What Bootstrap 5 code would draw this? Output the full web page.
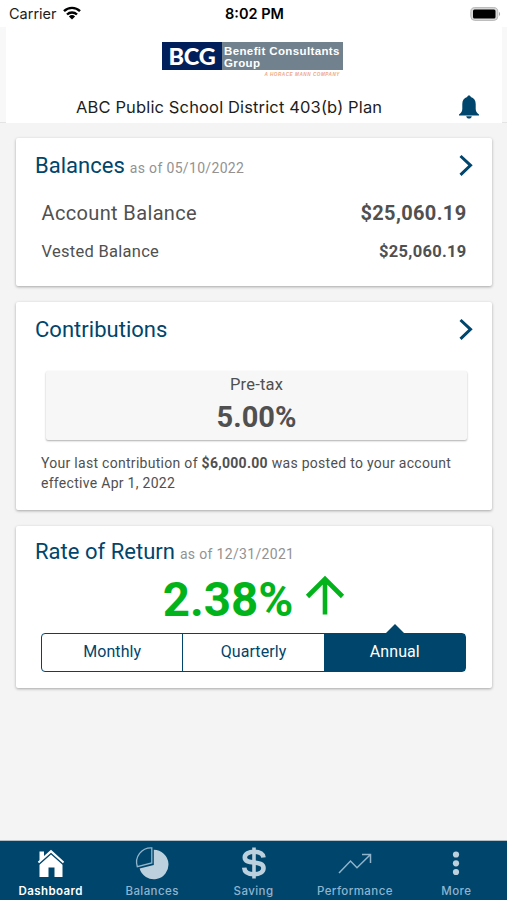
<!DOCTYPE html>
<html lang="en">
<head>
<meta charset="utf-8">
<meta name="viewport" content="width=device-width, initial-scale=1">
<title>Dashboard</title>
<link href="https://cdn.jsdelivr.net/npm/bootstrap@5.3.0/dist/css/bootstrap.min.css" rel="stylesheet">
<style>
  :root { --navy: #00456b; --ink: #505050; }
  body { font-family: Roboto, "Liberation Sans", sans-serif; background: #f4f4f4; color: var(--ink); height: 900px; overflow: hidden; }
  svg { display: block; flex: none; }
  .status-bar { height: 27px; background: #fff; font: 14.5px/27px Inter, sans-serif; color: #1c1c1c; padding: 0 7px 0 9px; }
  .status-bar > * { flex: 1 1 0; }
  .status-bar .wifi { margin-left: 6px; margin-top: -2px; }
  .status-bar .battery { margin-right: -2px; }
  .clock { font-weight: 600; color: #000; font-size: 14.5px; }
  .header-wrap { background: #f8f8f8; border-bottom: 1px solid #e4e4e4; height: 96px; }
  .plan-header { height: 96px; margin: 0 5px 0 6px; background: #fff; }
  .brand-logo { width: 181px; margin: 0 0 0 156px; padding-top: 15px; }
  .brand-box { height: 28px; color: #fff; }
  .brand-short { width: 60px; background: #011f5b; font: 900 23.5px/29px Lato, sans-serif; letter-spacing: -.2px; }
  .brand-long { background: #71828e; font: 700 11.5px/12px "Liberation Sans", sans-serif; padding: 3px 0 0 2px; letter-spacing: .38px; white-space: nowrap; }
  .brand-tag { font: italic 700 4.6px/8px "Liberation Sans", sans-serif; color: #eda685; letter-spacing: .56px; padding-right: 3px; margin-top: 1px; }
  .plan-name { font: 16.5px/22px Inter, sans-serif; color: #1d1d1d; letter-spacing: .14px; padding-left: 70px; height: 22px; margin-top: 17px; }
  .plan-name svg { margin-right: 22px; }
  .panel { background: #fff; border: 0; border-radius: 2px; margin: 0 15px 15.5px 16px; box-shadow: 0 1px 3px rgba(0,0,0,.32); color: var(--ink); }
  .panel-title { font-size: 22px; line-height: 26px; font-weight: 400; color: var(--navy); letter-spacing: .02px; }
  .as-of { font-size: 14px; color: #929292; letter-spacing: .33px; margin-left: 1px; }
  .panel-head { padding: 15px 19px 0 19px; height: 41px; }
  .panel-head svg { margin-top: -1px; }
  .money-row { padding: 0 25.5px 0 25.5px; }
  .rate-tile { margin: 28px 25px 0 30px; height: 69px; background: #f7f7f7; border-radius: 2px; box-shadow: 0 1px 2px rgba(0,0,0,.32); }
  .posted { font-size: 14px; line-height: 20px; letter-spacing: .29px; margin: 13.5px 25px 0; white-space: nowrap; }
  .ror { color: #03b31b; font-size: 47.5px; line-height: 56px; font-weight: 700; margin-top: 5px; }
  .ror svg { margin-left: 12px; margin-top: -5px; }
  .period { margin: 5px 26px 0 25px; height: 39px; border: 1px solid var(--navy); border-radius: 4px; font-size: 16px; letter-spacing: .08px; color: var(--navy); }
  .period > div { flex: 1 1 0; line-height: 36px; text-align: center; position: relative; }
  .period > div + div { border-left: 1px solid var(--navy); }
  .period .on { background: var(--navy); color: #fff; }
  .period .on::before { content: ""; position: absolute; left: 50%; top: -10px; margin-left: -9px; border: 9px solid transparent; border-top: 0; border-bottom-color: var(--navy); }
  .tab-bar { height: 60px; background: var(--navy); border-top: 1px solid #b5c0c6; font: 500 11.5px/14px Inter, sans-serif; letter-spacing: .42px; color: #8fb4d0; }
  .tab-bar > div { flex: 1 1 0; padding-top: 4px; text-align: center; }
  .tab-bar svg { margin: 0 auto 3px; }
  .tab-bar .now { color: #fff; font-weight: 600; }
</style>
</head>
<body class="d-flex flex-column">
  <div class="status-bar d-flex">
    <div class="d-flex align-items-center"><span>Carrier</span>
      <svg class="wifi" width="18" height="14" viewBox="0 0 18 14"><g fill="none" stroke="#000" stroke-width="2.4"><path d="M1 5.200a11.400 11.400 0 0 1 16 0"/><path d="M4 8.500a7.200 7.200 0 0 1 10 0"/></g><path d="M9 13.400L5.900 10.500a4.500 4.500 0 0 1 6.200 0z"/></svg>
    </div>
    <div class="clock text-center">8:02 PM</div>
    <div class="d-flex align-items-center justify-content-end">
      <svg class="battery" width="32" height="14" viewBox="0 0 32 14"><rect x=".8" y=".6" width="27" height="12.800" rx="4" fill="#d8d8d8" stroke="#b8b8b8"/><rect x="3" y="2.500" width="22.500" height="9" rx="1.500"/><path d="M29 4.800q2.200 2.200 0 4.400z" fill="#a5a5a5"/></svg>
    </div>
  </div>
  <header class="header-wrap">
    <div class="plan-header">
      <div class="brand-logo">
        <div class="brand-box d-flex">
          <div class="brand-short text-center">BCG</div>
          <div class="brand-long flex-fill">Benefit Consultants<br>Group</div>
        </div>
        <div class="brand-tag text-end">A HORACE MANN COMPANY</div>
      </div>
      <div class="plan-name d-flex align-items-center justify-content-between">
        <span>ABC Public School District 403(b) Plan</span>
        <svg width="22" height="24" viewBox="0 0 22 24" fill="#00456b"><path d="M11 .5c1 0 1.700.6 1.800 1.500 3.200.9 4.900 3.200 4.900 6.900v4.800c0 2.500 1 4.200 3.300 5.800v.9H1v-.9c2.300-1.600 3.300-3.300 3.300-5.800V8.900C4.300 5.200 6 2.900 9.200 2 9.300 1.100 10 .5 11 .5z"/><path d="M8.200 21.200h5.600c-.3 1.400-1.400 2.300-2.800 2.300s-2.500-.9-2.800-2.300z"/></svg>
      </div>
    </div>
  </header>

  <main class="flex-fill" style="padding-top:15px">
    <section class="card panel" style="height:148px">
      <div class="panel-head d-flex justify-content-between">
        <div><span class="panel-title">Balances</span> <span class="as-of">as of 05/10/2022</span></div>
        <svg width="14" height="26" viewBox="0 0 14 26" fill="none" stroke="#00456b" stroke-width="3"><path d="M1.500 4L11.500 13.300L1.500 22.800"/></svg>
      </div>
      <div class="money-row d-flex justify-content-between" style="font-size:20px;line-height:26px;margin-top:21px;letter-spacing:.36px"><span>Account Balance</span><b>$25,060.19</b></div>
      <div class="money-row d-flex justify-content-between" style="font-size:16.500px;line-height:20px;margin-top:16px;letter-spacing:.28px"><span>Vested Balance</span><b>$25,060.19</b></div>
    </section>

    <section class="card panel" style="height:208.500px">
      <div class="panel-head d-flex justify-content-between">
        <div><span class="panel-title">Contributions</span></div>
        <svg width="14" height="26" viewBox="0 0 14 26" fill="none" stroke="#00456b" stroke-width="3"><path d="M1.500 4L11.500 13.300L1.500 22.800"/></svg>
      </div>
      <div class="rate-tile text-center">
        <div style="font-size:16.500px;line-height:28px;letter-spacing:.2px">Pre-tax</div>
        <div style="font-size:29px;line-height:36px;font-weight:700">5.00%</div>
      </div>
      <p class="posted">Your last contribution of <b>$6,000.00</b> was posted to your account<br>effective Apr 1, 2022</p>
    </section>

    <section class="card panel" style="height:162.500px">
      <div class="panel-head" style="padding-top:13.500px">
        <span class="panel-title">Rate of Return</span> <span class="as-of">as of 12/31/2021</span>
      </div>
      <div class="ror d-flex justify-content-center">
        <span>2.38%</span>
        <svg width="40" height="56" viewBox="0 0 40 56" fill="none" stroke="#03b31b" stroke-width="4.600"><path d="M20 47.500V13M2.500 29.500L20 12L37.500 29.500"/></svg>
      </div>
      <div class="period d-flex"><div>Monthly</div><div>Quarterly</div><div class="on">Annual</div></div>
    </section>
  </main>

  <nav class="tab-bar d-flex">
    <div class="now">
      <svg width="36" height="36" viewBox="0 0 36 36"><path fill="#fff" d="M6.500 6.500h4.500v4.500L18 4.800l13.200 12-1.300 1.500L18 7.700 6.100 18.300l-1.300-1.500 1.700-1.600z"/><path fill="#fff" d="M18 9.500l11.500 10.300V32H21.500V22.500h-6V32H6.500V19.800z"/></svg>Dashboard
    </div>
    <div>
      <svg width="36" height="36" viewBox="0 0 36 36"><path fill="#bdd0de" d="M19.800 4.800A14.700 14.700 0 1 1 5.600 23.400L19.800 20z"/><path fill="none" stroke="#93b5cc" stroke-width="1.300" d="M17.800 2.800V18L3.300 21.700A14.500 14.500 0 0 1 17.800 2.800z"/></svg>Balances
    </div>
    <div>
      <svg width="36" height="36" viewBox="0 0 36 36" fill="none" stroke="#bdd0de" stroke-width="4.600"><path d="M27.500 12.500C27 8.500 23 6.800 18 6.800S8.800 9 8.800 12.500C8.800 20.500 27.500 14.500 27.500 23c0 4-4 6.300-9.300 6.300-6 0-9.700-2.300-10-6.700"/><path d="M18 2.500v31" stroke-width="3.600"/></svg>Saving
    </div>
    <div>
      <svg width="36" height="36" viewBox="0 0 36 36" fill="none" stroke="#8fb4cc" stroke-width="1.500"><path d="M2 28L13.500 16L20 22.700L33.500 9.500M25 9.500H33.500V18"/></svg>Performance
    </div>
    <div>
      <svg width="36" height="36" viewBox="0 0 36 36" fill="#bdd0de"><circle cx="18" cy="9.500" r="3.100"/><circle cx="18" cy="18.300" r="3.100"/><circle cx="18" cy="27" r="3.100"/></svg>More
    </div>
  </nav>
<script src="https://cdn.jsdelivr.net/npm/bootstrap@5.3.0/dist/js/bootstrap.bundle.min.js"></script>
</body>
</html>
